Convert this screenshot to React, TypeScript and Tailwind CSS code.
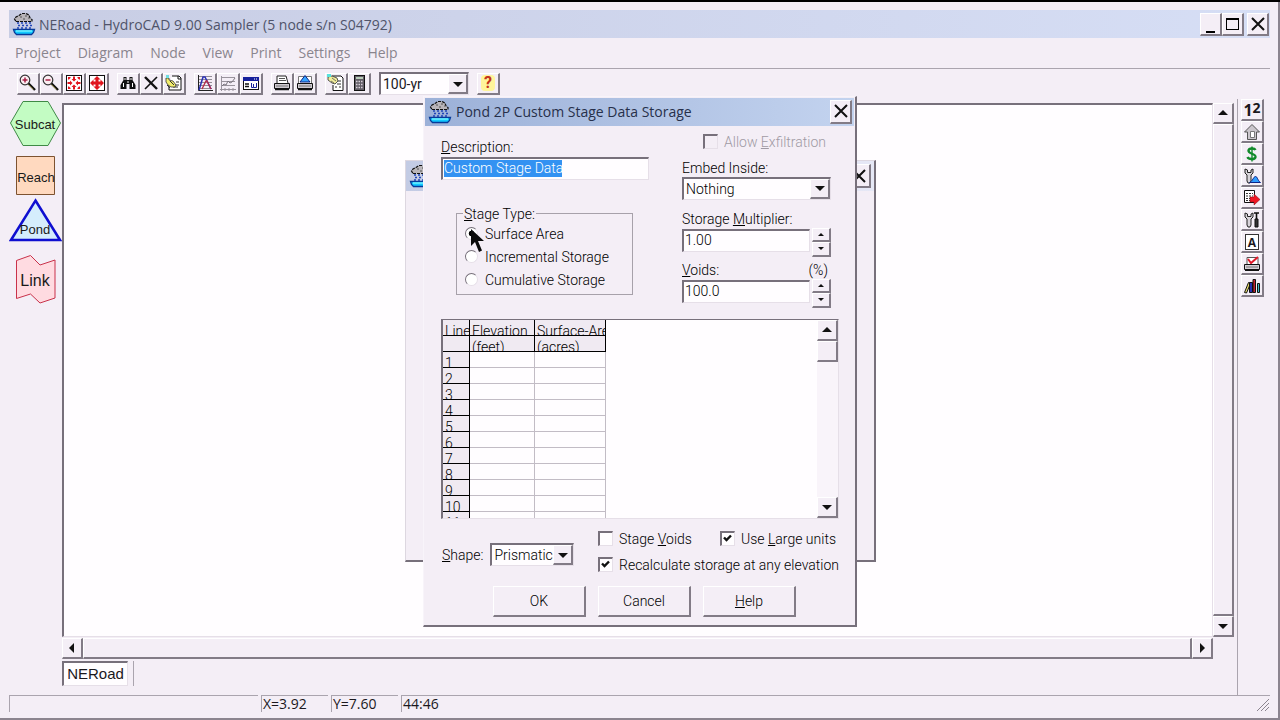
import React, { useState } from 'react'
import clsx from 'clsx'

interface IconProps {
  size?: number
}

const RAISED = 'bg-[#f4eef6] border border-t-white border-l-white border-b-2 border-r-2 border-b-[#827b86] border-r-[#827b86]'
const SUNKEN = 'bg-[#fffdff] border-t-2 border-l-2 border-t-[#77707b] border-l-[#77707b] border-b border-r border-b-[#e6dfe8] border-r-[#e6dfe8]'
const UI_FONT = "font-['Open_Sans','Noto_Sans',sans-serif]"
const FORM_FONT = "font-['Roboto','Liberation_Sans',sans-serif]"
const LABEL_FONT = "font-['Liberation_Sans',Arial,sans-serif]"

/* ---------- icons ---------- */

function AppIcon({ size = 24 }: IconProps) {
  return (
    <svg width={size} height={size} viewBox="0 0 24 24" className="shrink-0" aria-hidden="true">
      <path d="M4 9.500h16v-2l-2-1.500-1-3-3-1.500h-4l-3 2-3 1.500-1.500 2z" fill="#b9b5b9" stroke="#111" strokeWidth="1.200" strokeDasharray="3 1" />
      <path d="M8 5h2M13 4h2M11 7h2M16 6h1" stroke="#555" />
      <path d="M5 11h16M6 13.500h16M5 16h15" stroke="#2146b8" strokeWidth="1.500" strokeDasharray="2 2" />
      <path d="M1.500 17.500h21l-1 3-2 2h-15l-2-2z" fill="#12c8ff" stroke="#063a9a" strokeWidth="1.300" />
      <path d="M4 19h16" stroke="#6ff1ff" strokeWidth="1.500" />
    </svg>
  )
}

function Glyph({ children }: { children: React.ReactNode }) {
  return (
    <svg width="20" height="20" viewBox="0 0 20 20" fill="none" className="shrink-0" aria-hidden="true">
      {children}
    </svg>
  )
}

function ZoomGlyph({ plus = false }: { plus?: boolean }) {
  return (
    <Glyph>
      <circle cx="7" cy="7" r="4.800" fill="#fbeef2" stroke="#333" strokeWidth="1.200" />
      <path d="M4.500 7h5" stroke="#a3143c" strokeWidth="1.400" />
      {plus && <path d="M7 4.500v5" stroke="#a3143c" strokeWidth="1.400" />}
      <path d="M10.500 10.500l6.500 6.500" stroke="#111" strokeWidth="2.400" />
      <path d="M10.500 11.500l5 5" stroke="#c9b84a" strokeWidth=".6" />
    </Glyph>
  )
}

function FitGlyph() {
  return (
    <Glyph>
      <rect x="2.500" y="2.500" width="15" height="15" fill="#fff" stroke="#111" />
      <path d="M10 8.500L7.500 6H9V3.500h2V6h1.500zM10 11.500l2.500 2.500H11v2.500H9V14H7.500zM8.500 10L6 12.500V11H3.500V9H6V7.500zM11.500 10L14 7.500V9h2.500v2H14v1.500z" fill="#e0141e" />
      <path d="M4 4h2.500v1L5 6.500H4zM16 4v2.500h-1L13.500 5V4zM4 16v-2.500h1L6.500 15v1zM16 16h-2.500v-1l1.500-1.500h1z" fill="#e0141e" />
    </Glyph>
  )
}

function ExpandGlyph() {
  return (
    <Glyph>
      <rect x="2.500" y="2.500" width="15" height="15" fill="#fff" stroke="#111" />
      <path d="M10 3l3.500 3.500h-2v2h2v-2L17 10l-3.500 3.500v-2h-2v2h2L10 17l-3.500-3.500h2v-2h-2v2L3 10l3.500-3.500v2h2v-2h-2z" fill="#e0141e" />
    </Glyph>
  )
}

function FindGlyph() {
  return (
    <Glyph>
      <path d="M5.500 4h3v3h3V4h3v3l3 5v4h-6v-5h-3v5h-6v-4l3-5z" fill="#111" />
      <path d="M7 5v2M13 5v2M5.500 10v4M14.500 10v4" stroke="#fff" />
      <path d="M9 9h2" stroke="#fff" />
    </Glyph>
  )
}

function DeleteGlyph() {
  return (
    <Glyph>
      <path d="M4 4l12 12" stroke="#111" strokeWidth="2.400" />
      <path d="M16 4L4 16" stroke="#111" strokeWidth="1.600" />
    </Glyph>
  )
}

function EditGlyph() {
  return (
    <Glyph>
      <path d="M8 3h7l2 2v12H5v-5" fill="#fff" stroke="#111" />
      <path d="M14 3v3h3" stroke="#111" />
      <path d="M9 14h5M11 12h4M12 9h3" stroke="#333" />
      <path d="M2 5h3v2l4 1 3 4-1 2H7l-3-2-2-3z" fill="#f2ee6c" stroke="#333" strokeWidth=".8" />
      <path d="M6 8l4 4M3 12l3 3" stroke="#333" />
      <path d="M2 2h3v3H2z" fill="#6fdfe2" />
    </Glyph>
  )
}

function HydrographGlyph() {
  return (
    <Glyph>
      <path d="M3 3.500h14M3 6.500h14M3 9.500h14M3 12.500h14M3 15.500h14" stroke="#77727c" strokeWidth=".8" />
      <path d="M3.500 2v15.500H18" stroke="#222" />
      <path d="M4 17L8 4h2l6 12" stroke="#2a31b5" strokeWidth="1.500" />
      <path d="M7 16l4-8h1l4 8" stroke="#b92a4a" strokeWidth="1.300" />
    </Glyph>
  )
}

function PlotGlyph() {
  return (
    <Glyph>
      <path d="M3.500 3v15M2 16.500h16M3 4.500h14M3 8.500h14M3 12.500h14" stroke="#9a949d" />
      <path d="M4 13l2-2 2 1 2-4 2 2 2-1 3-4" stroke="#7c7780" />
      <path d="M7 15v3M11 15v3M15 15v3" stroke="#9a949d" />
    </Glyph>
  )
}

function ReportGlyph() {
  return (
    <Glyph>
      <rect x="2.500" y="4.500" width="15" height="12" fill="#fff" stroke="#111" />
      <path d="M2 4h16v4H2z" fill="#16209c" />
      <path d="M13 6h1M15 6h1" stroke="#fff" />
      <path d="M4 11h4M4 13.500h4" stroke="#111" strokeWidth="1.500" />
      <path d="M10.500 10v4.500h2V11M12.500 14.500h3V10" stroke="#16209c" />
    </Glyph>
  )
}

function PrinterGlyph() {
  return (
    <Glyph>
      <path d="M5 10V3h9l2 7" fill="#fff" stroke="#222" />
      <path d="M7 5.500h6M7 7.500h7" stroke="#555" />
      <path d="M2.500 10.500h15v5h-15z" fill="#cfcad0" stroke="#111" />
      <path d="M3 16.500h14" stroke="#111" strokeWidth="1.500" />
      <path d="M4 13h12" stroke="#777" />
    </Glyph>
  )
}

function PrintNodeGlyph() {
  return (
    <Glyph>
      <path d="M3.500 10V3.500h13V10" fill="#fff" stroke="#777" />
      <path d="M10 2.500l5 6.500H5z" fill="#39a5ff" stroke="#0b2386" />
      <path d="M2.500 10.500h15v5h-15z" fill="#cfcad0" stroke="#111" />
      <path d="M3 16.500h14" stroke="#111" strokeWidth="1.500" />
      <path d="M4 13h12" stroke="#777" />
    </Glyph>
  )
}

function NotesGlyph() {
  return (
    <Glyph>
      <path d="M6 3h9l2 2v12.500H7V12" fill="#fff" stroke="#111" />
      <path d="M12 8h3M11 11h4M9 14h2M13 14h2" stroke="#333" strokeWidth="1.200" />
      <path d="M2 4l4-1 5 2 1 3-3 3-3-1-4-3z" fill="#f0ec9a" stroke="#444" strokeWidth=".9" />
      <path d="M6 5l4 3M5 8l3 2" stroke="#555" strokeWidth=".8" />
      <path d="M1 1h4v3H1z" fill="#57e3dd" />
    </Glyph>
  )
}

function CalculatorGlyph() {
  return (
    <Glyph>
      <rect x="5.500" y="2.500" width="10" height="15" fill="#625d66" stroke="#111" />
      <path d="M7 5h7" stroke="#b9cdb9" strokeWidth="2" />
      <path d="M7 8.500h7M7 11.500h7M7 14.500h7" stroke="#d8d0da" strokeWidth="1.300" strokeDasharray="1.500 1" />
    </Glyph>
  )
}

function HouseGlyph() {
  return (
    <Glyph>
      <path d="M2.500 10L10 2.500 17.500 10h-3v7.500h-9V10z" fill="#cbc6cc" stroke="#555" />
      <path d="M8.500 9.500h4v6h-4z" fill="#fff" stroke="#777" />
    </Glyph>
  )
}

function DollarGlyph() {
  return (
    <Glyph>
      <path d="M13.500 6c-1-2-6.500-2-7 .5C6 10 14 9.500 13.500 13c-.5 3-7 2.500-8 0" stroke="#128a2b" strokeWidth="2.400" />
      <path d="M10 2.500v15" stroke="#128a2b" strokeWidth="1.400" />
    </Glyph>
  )
}

const WRENCH = 'M3 3v4l2 2v6l1 2h2l1-2V9l2-2V3L9 4v2.500H5.500V4z'

function NodeToolGlyph() {
  return (
    <Glyph>
      <path d={WRENCH} fill="#d8d4da" stroke="#222" />
      <path d="M7.500 16.500c3-1 4-6 6-6s2 4 5 6z" fill="#2f9dff" stroke="#0b2386" />
    </Glyph>
  )
}

function ExportGlyph() {
  return (
    <Glyph>
      <path d="M2.500 2.500h10v12h-10z" fill="#fff" stroke="#111" />
      <path d="M4 5.500h7M4 8h7M4 10.500h7M4 12.500h7" stroke="#333" strokeDasharray="2 1" />
      <path d="M8 9h4V6l6 5.500-6 5.500v-3H8z" fill="#ee1622" stroke="#7d1018" strokeWidth=".5" />
    </Glyph>
  )
}

function ToolsGlyph() {
  return (
    <Glyph>
      <path d={WRENCH} fill="#d8d4da" stroke="#222" />
      <path d="M12 3h5M14.500 3v7" stroke="#111" strokeWidth="1.600" />
      <path d="M13 9h3v8h-3z" fill="#333" stroke="#111" />
    </Glyph>
  )
}

function PrintCheckGlyph() {
  return (
    <Glyph>
      <path d="M5 10V3.500h11V10" fill="#fff" stroke="#555" />
      <path d="M6 5l3 4 7-6" stroke="#e11a2a" strokeWidth="2" />
      <path d="M2.500 10.500h15v5h-15z" fill="#d5d0d6" stroke="#111" />
      <path d="M3 16.500h14" stroke="#111" />
      <path d="M4 13h12" stroke="#777" />
    </Glyph>
  )
}

function BooksGlyph() {
  return (
    <Glyph>
      <path d="M2.500 16.500l4-10 2 1-4 9.500z" fill="#e9df6b" stroke="#111" />
      <path d="M7.500 6.500h3v10h-3z" fill="#2431b0" stroke="#111" />
      <path d="M11 3.500h2.500v13H11z" fill="#c31f2d" stroke="#111" />
      <path d="M15.500 7.500h2v9h-2z" fill="#3fb6c2" stroke="#111" />
    </Glyph>
  )
}

function ArrowGlyph({ dir }: { dir: 'up' | 'down' | 'left' | 'right' }) {
  const paths = {
    up: 'M0 7L5 2l5 5z',
    down: 'M0 3l5 5 5-5z',
    left: 'M7 0L2 5l5 5z',
    right: 'M3 0l5 5-5 5z',
  }
  return (
    <svg width="10" height="10" viewBox="0 0 10 10" aria-hidden="true">
      <path d={paths[dir]} fill="#111" />
    </svg>
  )
}

function CloseGlyph() {
  return (
    <svg width="14" height="14" viewBox="0 0 14 14" aria-hidden="true">
      <path d="M1 1l12 12M13 1L1 13" stroke="#111" strokeWidth="2" />
    </svg>
  )
}

function Pointer() {
  return (
    <svg width="14" height="24" viewBox="0 0 14 24" className="absolute left-[6px] top-[3px] z-10 pointer-events-none" aria-hidden="true">
      <path d="M0 0v17l4-4 4 10 3-1.500L7 12h6z" fill="#0b0b0b" />
    </svg>
  )
}

/* ---------- controls ---------- */

function ToolButton({ label, children }: { label: string; children: React.ReactNode }) {
  return (
    <button aria-label={label} title={label} className={clsx(RAISED, 'flex h-[22px] w-[23px] shrink-0 items-center justify-center')}>
      {children}
    </button>
  )
}

function ScrollButton({ dir }: { dir: 'up' | 'down' | 'left' | 'right' }) {
  return (
    <button aria-label={`Scroll ${dir}`} className={clsx(RAISED, 'flex h-[21px] w-[21px] shrink-0 items-center justify-center')}>
      <ArrowGlyph dir={dir} />
    </button>
  )
}

interface DropProps {
  id: string
  label?: string
  options: string[]
  className?: string
}

function DropDown({ id, label, options, className }: DropProps) {
  return (
    <div className={clsx(SUNKEN, 'relative h-[23px]', className)}>
      <select id={id} aria-label={label} className="block h-full w-full appearance-none bg-transparent pl-[2px] text-[14px] leading-[18px] outline-none">
        {options.map((o) => (
          <option key={o}>{o}</option>
        ))}
      </select>
      <span className={clsx(RAISED, 'pointer-events-none absolute inset-y-0 right-0 flex w-[20px] items-center justify-center')}>
        <ArrowGlyph dir="down" />
      </span>
    </div>
  )
}

function Spinner({ id, value }: { id: string; value: string }) {
  return (
    <div className="flex h-[29px] items-start justify-between">
      <input id={id} defaultValue={value} className={clsx(SUNKEN, 'mt-px h-[23px] w-[128px] pb-px pl-px text-[14px] outline-none')} />
      <div className="flex h-full w-[19px] flex-col">
        <button aria-label="Increase" className={clsx(RAISED, 'flex flex-1 items-center justify-center')}>
          <svg width="6" height="4" viewBox="0 0 6 4"><path d="M0 4l3-3 3 3z" fill="#111" /></svg>
        </button>
        <button aria-label="Decrease" className={clsx(RAISED, 'flex flex-1 items-center justify-center')}>
          <svg width="6" height="4" viewBox="0 0 6 4"><path d="M0 0l3 3 3-3z" fill="#111" /></svg>
        </button>
      </div>
    </div>
  )
}

interface CheckProps {
  checked?: boolean
  disabled?: boolean
  children: React.ReactNode
}

function CheckBox({ checked = false, disabled = false, children }: CheckProps) {
  const [on, setOn] = useState(checked)
  return (
    <label className={clsx('flex h-[16px] items-center gap-[6px] whitespace-nowrap', disabled && 'text-[#a09aa4]')}>
      <span className="relative block h-[15px] w-[15px]">
        <input
          type="checkbox"
          checked={on}
          disabled={disabled}
          onChange={() => setOn(!on)}
          className={clsx(SUNKEN, 'block h-[15px] w-[15px] appearance-none disabled:bg-[#f4eef6]')}
        />
        {on && (
          <svg width="9" height="9" viewBox="0 0 9 9" className="pointer-events-none absolute left-[3px] top-[3px]">
            <path d="M1 3.500L3.500 6 8 1.500" fill="none" stroke="#111" strokeWidth="2.400" />
          </svg>
        )}
      </span>
      <span>{children}</span>
    </label>
  )
}

/* ---------- dialog ---------- */

const STAGE_TYPES = ['Surface Area', 'Incremental Storage', 'Cumulative Storage']
const LINES = [1, 2, 3, 4, 5, 6, 7, 8, 9, 10, 11]

function Clip({ children }: { children?: React.ReactNode }) {
  return <div className="h-[15px] overflow-hidden whitespace-nowrap pl-[2px] pt-[4px] text-left text-[14px] font-light leading-[15px]">{children}</div>
}

function StageTable() {
  const head = 'border-b border-r border-black bg-[#f0eaf2] p-0'
  const cell = 'border-b border-r border-[#c2bcc5] p-0'
  return (
    <div className="flex h-[200px] justify-between overflow-hidden border border-l-2 border-l-[#77707b] border-t-[#77707b] border-b-[#e6dfe8] border-r-[#e6dfe8] bg-[#fffdff]">
      <div className="h-full overflow-hidden">
        <table className="table-fixed w-[163px] border-separate border-spacing-0">
          <colgroup>
            <col className="w-[27px]" />
            <col className="w-[65px]" />
            <col className="w-[71px]" />
          </colgroup>
          <thead>
            <tr>
              <th className={head}><Clip>Line</Clip></th>
              <th className={head}><Clip>Elevation</Clip></th>
              <th className={head}><Clip>Surface-Area</Clip></th>
            </tr>
            <tr>
              <th className={head}><Clip /></th>
              <th className={head}><Clip>(feet)</Clip></th>
              <th className={head}><Clip>(acres)</Clip></th>
            </tr>
          </thead>
          <tbody>
            {LINES.map((n) => (
              <tr key={n}>
                <th className={head}><Clip>{n}</Clip></th>
                <td className={cell} />
                <td className={cell} />
              </tr>
            ))}
          </tbody>
        </table>
      </div>
      <div className="flex w-[21px] flex-col bg-[#f9f4fa]">
        <ScrollButton dir="up" />
        <div className={clsx(RAISED, 'h-[21px]')} />
        <div className="flex-1" />
        <ScrollButton dir="down" />
      </div>
    </div>
  )
}

function StorageDialog() {
  const [stageType, setStageType] = useState(STAGE_TYPES[0])
  const action = clsx(RAISED, 'h-[31px] w-[93px] text-[14px]')
  return (
    <section
      role="dialog"
      aria-label="Pond 2P Custom Stage Data Storage"
      className={clsx(FORM_FONT, 'relative w-[434px] border border-b-2 border-r-2 border-[#f8f4fa] border-b-[#77707b] border-r-[#77707b] bg-[#f4eef6] text-[14px] font-light leading-[16px] text-black')}
    >
      <header className="mx-px mt-px flex h-[28px] items-center bg-linear-to-r from-[#9cb1d8] to-[#c3d3ef] pl-[3px] pr-[2px]">
        <AppIcon />
        <h2 className={clsx(UI_FONT, 'flex-1 pl-[4px] text-[14px] font-normal leading-[18px] text-[#27304a]')}>Pond 2P Custom Stage Data Storage</h2>
        <button aria-label="Close" className={clsx(RAISED, 'flex h-[24px] w-[22px] items-center justify-center')}>
          <CloseGlyph />
        </button>
      </header>

      <form className="pb-[8px] pl-[17px] pr-[16px] pt-[8px]" onSubmit={(e) => e.preventDefault()}>
        <div className="flex justify-between pr-[8px]">
          <div className="w-[208px] pt-[5px]">
            <label htmlFor="description" className="block"><u>D</u>escription:</label>
            <div className={clsx(SUNKEN, 'mt-[2px] flex h-[23px] items-center pb-px pl-px')}>
              <input id="description" defaultValue="Custom Stage Data" className="h-[17px] w-[118px] bg-[#3392f2] text-white outline-none" />
            </div>
            <fieldset className="relative ml-[15px] mt-[26px] h-[89px] w-[177px] border border-[#a7a1aa] pl-[8px]">
              <legend className="-ml-[2px] px-px"><u>S</u>tage Type:</legend>
              <div className="flex flex-col gap-[7px] pt-[4px]">
                {STAGE_TYPES.map((t, i) => (
                  <label key={t} className="relative flex h-[16px] items-center gap-[7px]">
                    <input
                      type="radio"
                      name="stage"
                      checked={stageType === t}
                      onChange={() => setStageType(t)}
                      className="h-[13px] w-[13px] appearance-none rounded-full border border-[#e6dfe8] border-l-[#77707b] border-t-[#77707b] bg-white checked:bg-radial checked:from-black checked:from-30% checked:to-white checked:to-40%"
                    />
                    <span>{t}</span>
                    {i === 0 && <Pointer />}
                  </label>
                ))}
              </div>
            </fieldset>
          </div>

          <div className="w-[149px]">
            <div className="pl-[21px]">
              <CheckBox disabled>Allow <u>E</u>xfiltration</CheckBox>
            </div>
            <label htmlFor="embed" className="mt-[10px] block">Embed Inside:</label>
            <DropDown id="embed" options={['Nothing']} className="mt-px" />
            <label htmlFor="multiplier" className="mb-px mt-[11px] block">Storage <u>M</u>ultiplier:</label>
            <Spinner id="multiplier" value="1.00" />
            <label htmlFor="voids" className="mb-px mt-[5px] flex justify-between pr-[3px]">
              <span><u>V</u>oids:</span>
              <span>(%)</span>
            </label>
            <Spinner id="voids" value="100.0" />
          </div>
        </div>

        <div className="mt-[11px]">
          <StageTable />
        </div>

        <div className="mt-[12px] flex pl-px">
          <div className="flex w-[156px] items-center gap-[7px] pt-[6px]">
            <label htmlFor="shape"><u>S</u>hape:</label>
            <DropDown id="shape" options={['Prismatic']} className="w-[84px]" />
          </div>
          <div className="flex flex-1 flex-col gap-[10px]">
            <div className="flex justify-between pr-[3px]">
              <CheckBox>Stage <u>V</u>oids</CheckBox>
              <CheckBox checked>Use <u>L</u>arge units</CheckBox>
            </div>
            <CheckBox checked>Recalculate storage at any elevation</CheckBox>
          </div>
        </div>

        <div className="mt-[13px] flex justify-center gap-[12px] pl-[9px]">
          <button className={action}>OK</button>
          <button type="button" className={action}>Cancel</button>
          <button type="button" className={action}><u>H</u>elp</button>
        </div>
      </form>
    </section>
  )
}

/* ---------- main window ---------- */

const MENUS = ['Project', 'Diagram', 'Node', 'View', 'Print', 'Settings', 'Help']

const TOOL_GROUPS = [
  [
    { label: 'Zoom in', icon: <ZoomGlyph plus /> },
    { label: 'Zoom out', icon: <ZoomGlyph /> },
    { label: 'Fit diagram', icon: <FitGlyph /> },
    { label: 'Full extent', icon: <ExpandGlyph /> },
  ],
  [
    { label: 'Find', icon: <FindGlyph /> },
    { label: 'Delete', icon: <DeleteGlyph /> },
    { label: 'Edit', icon: <EditGlyph /> },
  ],
  [
    { label: 'Hydrograph', icon: <HydrographGlyph /> },
    { label: 'Plot', icon: <PlotGlyph /> },
    { label: 'Report', icon: <ReportGlyph /> },
  ],
  [
    { label: 'Print', icon: <PrinterGlyph /> },
    { label: 'Print node', icon: <PrintNodeGlyph /> },
  ],
  [
    { label: 'Notes', icon: <NotesGlyph /> },
    { label: 'Calculator', icon: <CalculatorGlyph /> },
  ],
]

const RAIL = [
  {
    label: 'Numbering',
    icon: (
      <span className="flex items-start text-[16px] font-bold leading-[20px]">
        1<span className="text-[14px] leading-[16px]">2</span>
      </span>
    ),
  },
  { label: 'Land use', icon: <HouseGlyph /> },
  { label: 'Cost', icon: <DollarGlyph /> },
  { label: 'Node settings', icon: <NodeToolGlyph /> },
  { label: 'Export', icon: <ExportGlyph /> },
  { label: 'Tools', icon: <ToolsGlyph /> },
  {
    label: 'Fonts',
    icon: <span className="h-[16px] w-[14px] border border-[#333] bg-white text-[12px] font-bold leading-[15px]">A</span>,
  },
  { label: 'Print options', icon: <PrintCheckGlyph /> },
  { label: 'Library', icon: <BooksGlyph /> },
]

function NodePalette() {
  return (
    <nav aria-label="Nodes" className="flex w-[53px] shrink-0 flex-col items-center pt-px">
      <button aria-label="Subcat">
        <svg width="53" height="47" viewBox="0 0 53 47" fontFamily="Liberation Sans">
          <path d="M14 1.500h25L51.500 23 39 45.500H14L1.500 23z" fill="#c3fcc3" stroke="#3f8a46" />
          <text x="26" y="29" textAnchor="middle" fontSize="13" fill="#1a1a1a">Subcat</text>
        </svg>
      </button>
      <button aria-label="Reach" className="mt-[9px]">
        <svg width="53" height="40" viewBox="0 0 53 40" fontFamily="Liberation Sans">
          <path d="M7.500.5h38v38h-38z" fill="#ffd9bf" stroke="#7d5230" />
          <text x="27" y="26" textAnchor="middle" fontSize="13" fill="#1a1a1a">Reach</text>
        </svg>
      </button>
      <button aria-label="Pond" className="mt-px">
        <svg width="53" height="46" viewBox="0 0 53 46" fontFamily="Liberation Sans">
          <path d="M26.500 3.500L51 43H2z" fill="#d5edfc" stroke="#0f0fd0" strokeWidth="2.500" />
          <text x="26" y="37" textAnchor="middle" fontSize="13" fill="#1a1a1a">Pond</text>
        </svg>
      </button>
      <button aria-label="Link" className="mt-[11px]">
        <svg width="53" height="50" viewBox="0 0 53 50" fontFamily="Liberation Sans">
          <path d="M7.500 6.500l14-5 9.500 9.500 15-5v38l-15 5-9.500-9-14 4.500z" fill="#ffdbe1" stroke="#c9314a" />
          <text x="26" y="32" textAnchor="middle" fontSize="16" fill="#1a1a1a">Link</text>
        </svg>
      </button>
    </nav>
  )
}

export default function App() {
  const statusCell = 'h-[17px] border-l border-t border-[#aaa4ae] pl-px leading-[16px]'
  return (
    <div className={clsx(UI_FONT, 'relative flex min-h-screen flex-col border-t-2 border-t-black bg-[#f4eef6] text-[14px] text-[#1b181d]')}>
      <div className="flex flex-1 flex-col border-b-2 border-r-2 border-b-[#8b848f] border-r-[#8b848f] pb-[6px] pl-[9px] pr-[8px] pt-[8px]">
        <header className="flex h-[28px] items-center bg-linear-to-r from-[#c8cde4] to-[#d6def5] pl-[3px] pr-px">
          <AppIcon />
          <h1 className="flex-1 pl-[3px] text-[14px] text-[#50546a]">NERoad - HydroCAD 9.00 Sampler (5 node s/n S04792)</h1>
          <button aria-label="Minimize" className={clsx(RAISED, 'flex h-[23px] w-[22px] justify-center pt-[17px]')}>
            <span className="h-[2px] w-[9px] bg-black" />
          </button>
          <button aria-label="Maximize" className={clsx(RAISED, 'flex h-[23px] w-[22px] items-center justify-center')}>
            <span className="h-[12px] w-[13px] border border-t-2 border-black" />
          </button>
          <button aria-label="Close" className={clsx(RAISED, 'ml-[3px] flex h-[23px] w-[22px] items-center justify-center')}>
            <CloseGlyph />
          </button>
        </header>

        <nav aria-label="Menu" className="flex h-[31px] items-center gap-[17px] border-b border-[#aaa4ae] pb-[2px] pl-[6px] text-[#8a858e]">
          {MENUS.map((m) => (
            <button key={m}>{m}</button>
          ))}
        </nav>

        <div className={clsx(FORM_FONT, 'flex h-[30px] items-center gap-[8px] pb-px pl-[8px]')}>
          {TOOL_GROUPS.map((group, i) => (
            <div key={i} className="flex">
              {group.map((t) => (
                <ToolButton key={t.label} label={t.label}>{t.icon}</ToolButton>
              ))}
            </div>
          ))}
          <DropDown id="event" label="Rainfall event" options={['100-yr']} className="w-[90px]" />
          <button aria-label="Help" className={clsx(RAISED, 'flex h-[22px] w-[23px] items-center justify-center')}>
            <span className="flex h-[16px] w-[14px] items-center justify-center rounded-[4px] bg-[#fff59a] text-[16px] font-bold leading-[16px] text-[#c4331c]">?</span>
          </button>
        </div>

        <div className="flex flex-1">
          <NodePalette />
          <main className="flex min-w-0 flex-1 flex-col pr-[2px] pt-[4px]">
            <div className="flex flex-1">
              <div className={clsx(SUNKEN, 'flex-1')} />
              <div className="flex w-[22px] flex-col">
                <ScrollButton dir="up" />
                <div className={clsx(RAISED, 'w-[21px] flex-1')} />
                <ScrollButton dir="down" />
              </div>
            </div>
            <div className="flex pr-[22px] pt-px">
              <ScrollButton dir="left" />
              <div className={clsx(RAISED, 'flex-1')} />
              <ScrollButton dir="right" />
            </div>
            <div className={clsx(LABEL_FONT, 'flex gap-[5px] pb-[9px] pt-[2px] text-[15px]')}>
              <button className={clsx(SUNKEN, 'h-[25px] w-[66px]')}>NERoad</button>
              <div className="w-px bg-[#aaa4ae]" />
            </div>
          </main>
          <aside className="flex w-[33px] shrink-0 flex-col border-l border-[#aaa4ae] pl-[3px]">
            {RAIL.map((r) => (
              <ToolButton key={r.label} label={r.label}>{r.icon}</ToolButton>
            ))}
          </aside>
        </div>

        <footer className="flex gap-[3px]">
          <div className={clsx(statusCell, 'w-[249px]')} />
          <div className={clsx(statusCell, 'w-[67px]')}>X=3.92</div>
          <div className={clsx(statusCell, 'w-[67px]')}>Y=7.60</div>
          <div className={clsx(statusCell, 'flex flex-1 items-end justify-between')}>
            <span>44:46</span>
            <svg width="14" height="14" viewBox="0 0 14 14" aria-hidden="true">
              <path d="M1 13L13 1M5 13l8-8M9 13l4-4" stroke="#8b848f" />
            </svg>
          </div>
        </footer>
      </div>

      {/* editor window that sits behind the storage dialog */}
      <div className="absolute inset-0 flex items-center justify-center">
        <div className="h-[402px] w-[471px] border border-b-2 border-r-2 border-[#ddd7e0] border-b-[#77707b] border-r-[#77707b] bg-[#f4eef6]">
          <div className="flex h-[30px] items-center justify-between bg-linear-to-r from-[#c3cbe4] to-[#e6e8f6] px-[3px]">
            <AppIcon />
            <button aria-label="Close editor" className={clsx(RAISED, 'flex h-[24px] w-[22px] items-center justify-center')}>
              <CloseGlyph />
            </button>
          </div>
        </div>
      </div>
      <div className="absolute inset-0 flex items-center justify-center">
        <StorageDialog />
      </div>
    </div>
  )
}
